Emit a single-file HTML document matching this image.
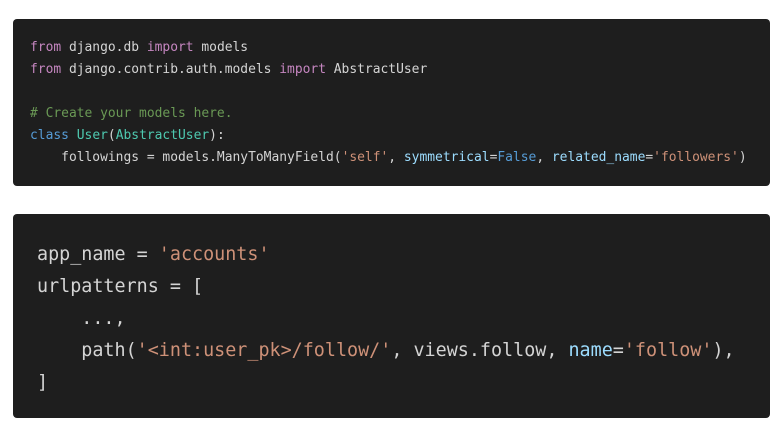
<!DOCTYPE html>
<html><head><meta charset="utf-8"><style>
body{margin:0;width:784px;height:436px;background:#fff;position:relative;overflow:hidden}
.box{position:absolute;left:13px;width:757px;background:#1e1e1e;border-radius:4px}
pre{margin:0;position:absolute;font-family:"DejaVu Sans Mono","Liberation Mono",monospace;color:#d4d4d4;white-space:pre}
.k{color:#c586c0}.s{color:#ce9178}.c{color:#6a9955}.b{color:#569cd6}.t{color:#4ec9b0}.p{color:#9cdcfe}
</style></head><body>
<div class="box" style="top:19px;height:167px"></div>
<pre style="left:30px;top:37px;font-size:12.95px;line-height:22px"><span class="k">from</span> django.db <span class="k">import</span> models
<span class="k">from</span> django.contrib.auth.models <span class="k">import</span> AbstractUser

<span class="c"># Create your models here.</span>
<span class="b">class</span> <span class="t">User</span>(<span class="t">AbstractUser</span>):
    followings = models.ManyToManyField(<span class="s">'self'</span>, <span class="p">symmetrical</span>=<span class="b">False</span>, <span class="p">related_name</span>=<span class="s">'followers'</span>)</pre>
<div class="box" style="top:214px;height:204px"></div>
<pre style="left:37px;top:239px;font-size:18.4px;line-height:32px">app_name = <span class="s">'accounts'</span>
urlpatterns = [
    ...,
    path(<span class="s">'&lt;int:user_pk&gt;/follow/'</span>, views.follow, <span class="p">name</span>=<span class="s">'follow'</span>),
]</pre>
</body></html>
